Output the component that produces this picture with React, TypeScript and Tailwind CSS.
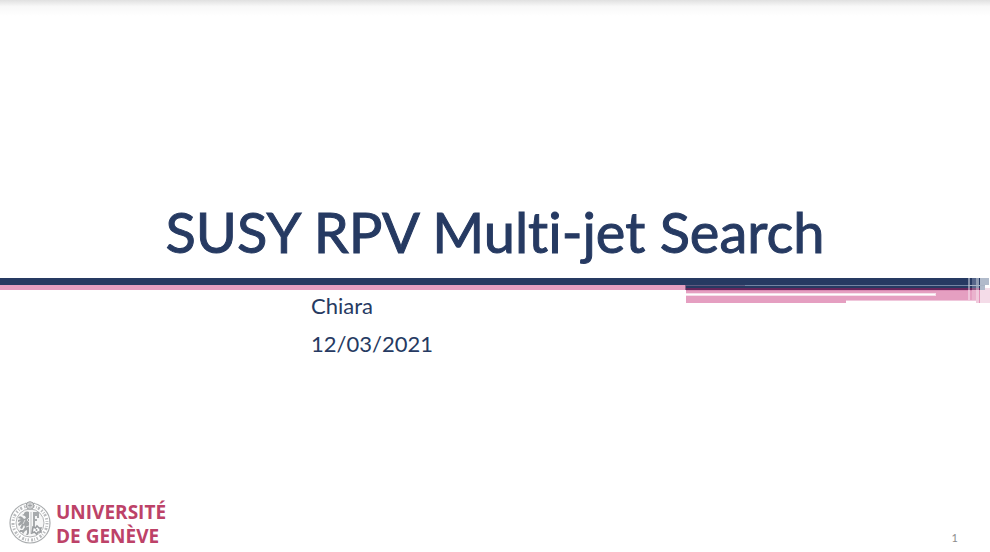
function RibbonOrnament() {
  return (
    <svg
      className="absolute top-0 right-0"
      width="305"
      height="25"
      viewBox="0 0 305 25"
      shapeRendering="crispEdges"
      aria-hidden="true"
    >
      <rect x="0" y="0" width="305" height="12" fill="#ffffff" />
      <rect x="0" y="0" width="295" height="12" fill="#263a62" />
      <rect x="0" y="7" width="60" height="1" fill="#5f5a80" />
      <rect x="60" y="7" width="235" height="1" fill="#7485a3" />
      <rect x="0" y="10" width="295" height="2" fill="#66265b" />
      <rect x="0" y="7" width="1" height="5" fill="#8a6285" />
      <rect x="1" y="12" width="294" height="10" fill="#e59fc1" />
      <rect x="1" y="12" width="294" height="1" fill="#d88bb2" />
      <rect x="1" y="15" width="250" height="3" fill="#f6dfea" />
      <rect x="1" y="16" width="249" height="1" fill="#ffffff" />
      <rect x="1" y="18" width="160" height="7" fill="#e59fc1" />
      <rect x="161" y="22" width="130" height="1" fill="#f0c8dc" />
      <rect x="283" y="0" width="2" height="12" fill="#8591a9" />
      <rect x="287" y="0" width="4" height="12" fill="#56668a" />
      <rect x="291" y="0" width="3" height="12" fill="#8f9cb3" />
      <rect x="295" y="0" width="9" height="7" fill="#b1bbcb" />
      <rect x="295" y="7" width="5" height="5" fill="#b1bbcb" />
      <rect x="283" y="7" width="17" height="1" fill="#a9b4c5" />
      <rect x="283" y="10" width="2" height="2" fill="#ab80a5" />
      <rect x="287" y="10" width="4" height="2" fill="#895781" />
      <rect x="291" y="10" width="3" height="2" fill="#b68cad" />
      <rect x="283" y="12" width="2" height="10" fill="#efc5da" />
      <rect x="287" y="12" width="4" height="10" fill="#eab2cd" />
      <rect x="291" y="12" width="3" height="13" fill="#f1cbdd" />
      <rect x="294" y="12" width="1" height="13" fill="#e295ba" />
      <rect x="295" y="12" width="10" height="13" fill="#f4dce8" />
      <rect x="300" y="10" width="5" height="2" fill="#f4dce8" />
    </svg>
  );
}

function Seal() {
  return (
    <svg className="h-11 w-11 shrink-0" viewBox="0 0 44 44" fill="none" aria-hidden="true">
      <circle cx="22" cy="23" r="20" stroke="#a9acae" strokeWidth="1.2" />
      <circle
        cx="22"
        cy="23"
        r="17"
        stroke="#b9bbbd"
        strokeWidth="3"
        strokeDasharray="1.4 1.6 .8 1.2 2 2.2"
      />
      <circle cx="22" cy="23" r="14" fill="#f7f7f7" stroke="#b4b6b8" strokeWidth="1" />
      <circle cx="22" cy="5.5" r="3.8" fill="#d3d4d5" stroke="#a0a3a5" strokeWidth="1" />
      <path d="M20 5.5h4M22 3.5v4M17.5 3l1.5 1M26.5 3l-1.5 1" stroke="#9a9da0" strokeWidth=".8" />
      <path
        d="M21 12c-3-1-5 0-5 2l-2 1 3 1 1 2-2 1c-3-4-5-3-6-1l3 1-3 1 0 2 3-1-3 3 1 2 3-2-2 4 2 1 2-4 1 2-2 3-3 0-1 2 3 0 1 2 2-3 2-1 0 3-1 2 2 0 1-2z"
        fill="#a1a4a6"
      />
      <path d="M21 18l-2 2 2 2M17 20l-2 4M21 26l-3 1" stroke="#eeeeee" strokeWidth=".8" />
      <path d="M25 12h6v6h-2v-2h-2v3h2v2h-2v6h-2z" fill="#a8abad" />
      <path d="M23 12v22" stroke="#c1c3c4" strokeWidth="1" />
      <path
        d="M25 27l2.500 1 1.500-2 2 2h2l-1 2 1 2-3 0-1.500 2-2-2-2.500 1z"
        fill="#ffffff"
        stroke="#9a9da0"
        strokeWidth="1.6"
      />
      <circle cx="28.5" cy="30" r="1" fill="#9a9da0" />
    </svg>
  );
}

export default function App() {
  return (
    <main className="flex min-h-screen flex-col bg-white font-['Lato',sans-serif] text-[#263a62] [font-variant-ligatures:no-common-ligatures]">
      <div className="h-4 bg-linear-to-b from-[#e0e0e0] via-[#f8f8f8] via-40% to-white" />

      <header className="flex h-[262px] items-end justify-center pb-3">
        <h1 className="text-[56px] leading-[68px] whitespace-nowrap [-webkit-text-stroke:1px_#263a62]">
          SUSY RPV Multi-jet Search
        </h1>
      </header>

      <div className="relative">
        <div className="h-[7px] bg-[#263a62]" />
        <div className="h-[5px] bg-[#e59fc1]" />
        <RibbonOrnament />
      </div>

      <section className="-mt-[3px] ml-[311px] text-[22px] leading-[38px]">
        <p>Chiara</p>
        <p>12/03/2021</p>
      </section>

      <footer className="mt-auto flex items-end justify-between pr-8 pb-1 pl-2">
        <div className="flex items-start gap-1">
          <Seal />
          <div className="font-['Open_Sans',sans-serif] text-[19px] leading-6 font-bold text-[#bd4268]">
            <p>UNIVERSITÉ</p>
            <p>DE GENÈVE</p>
          </div>
        </div>
        <span className="text-[11px] leading-5 text-[#8c8c8c]">1</span>
      </footer>
    </main>
  );
}
